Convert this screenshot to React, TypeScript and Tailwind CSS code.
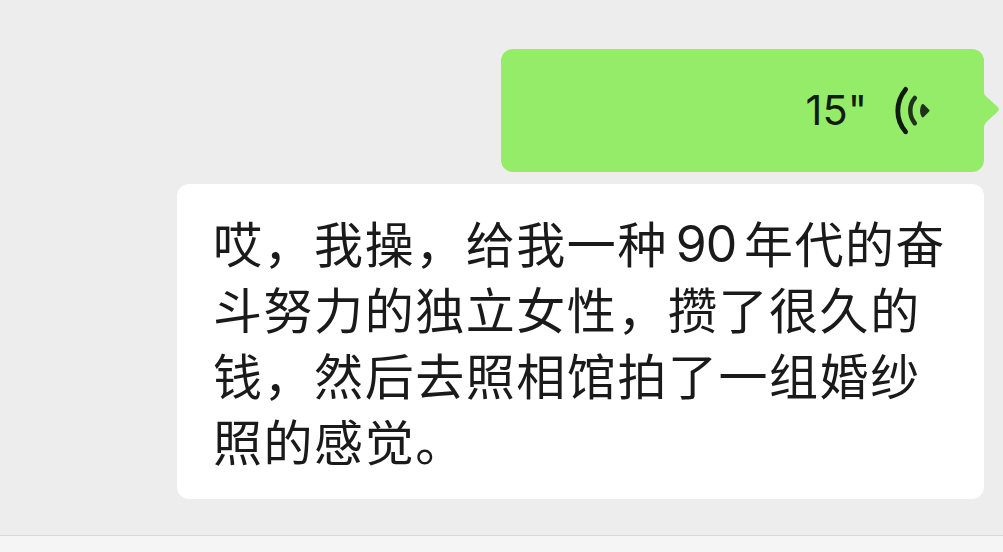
const transcript = [
  ["哎，我操，给我一种", "90", "年代的奋"],
  ["斗努力的独立女性，攒了很久的"],
  ["钱，然后去照相馆拍了一组婚纱"],
  ["照的感觉。"],
];

const VoiceIcon = () => (
  <svg width="41" height="52" viewBox="0 0 41 52" fill="none" strokeLinecap="round">
    <path d="M15.6 4.4C5.2 17.1 5.2 34.5 15.6 46.8" stroke="#111b0b" strokeWidth="4.8" />
    <path d="M24.8 13C18.8 20.1 18.8 31.1 24.8 38.2" stroke="#20331a" strokeWidth="4.5" />
    <path
      d="M32.8 20.3L38.2 25.6L32.8 31.1C30.8 28 30.8 23.4 32.8 20.3Z"
      fill="#20331a"
      stroke="#20331a"
      strokeWidth="2.6"
      strokeLinejoin="round"
    />
  </svg>
);

const VoiceMessage = () => (
  <div className="relative flex h-[123px] w-[483px] items-center justify-end rounded-[12px] bg-[#95ec69] pr-[53px]">
    <span className="mr-[23px] font-['Inter',sans-serif] text-[41.5px] leading-none text-[#141c10]">
      15"
    </span>
    <VoiceIcon />
    <svg
      className="absolute top-[43px] -right-[16px]"
      width="17"
      height="38"
      viewBox="0 0 17 38"
      fill="#95ec69"
    >
      <path d="M0 0H1C1 2.2 2 3.5 4 5.2L14.6 14.7C16.4 16.3 16.4 18.2 14.6 19.7L4 29.4C2 31.3 1 33 1 36H0Z" />
    </svg>
  </div>
);

const Transcript = () => (
  <div className="h-[315px] w-[807px] rounded-[12px] bg-white pt-[25px] pl-[36px] font-['Noto_Sans_CJK_SC',sans-serif] text-[49px] tracking-[1.55px] text-[#1a1a1a]">
    {transcript.map((line, index) => (
      <p key={index} className="flex h-[66px] items-center leading-[66px] whitespace-nowrap">
        {line.map((part) =>
          /^\d+$/.test(part) ? (
            <span
              key={part}
              className="w-[76px] pt-[4px] text-center font-['Inter',sans-serif] text-[50px] tracking-[-1px]"
            >
              {part}
            </span>
          ) : (
            <span key={part}>{part}</span>
          )
        )}
      </p>
    ))}
  </div>
);

const App = () => {
  return (
    <div className="flex h-[552px] w-[1003px] flex-col overflow-hidden bg-[#ededed]">
      <main className="flex flex-1 flex-col items-end gap-[12px] pt-[49px] pr-[19px]">
        <VoiceMessage />
        <Transcript />
      </main>
      <footer className="h-[17px] border-t border-[#d9d9d9] bg-[#f5f5f5]" />
    </div>
  );
};

export default App;
